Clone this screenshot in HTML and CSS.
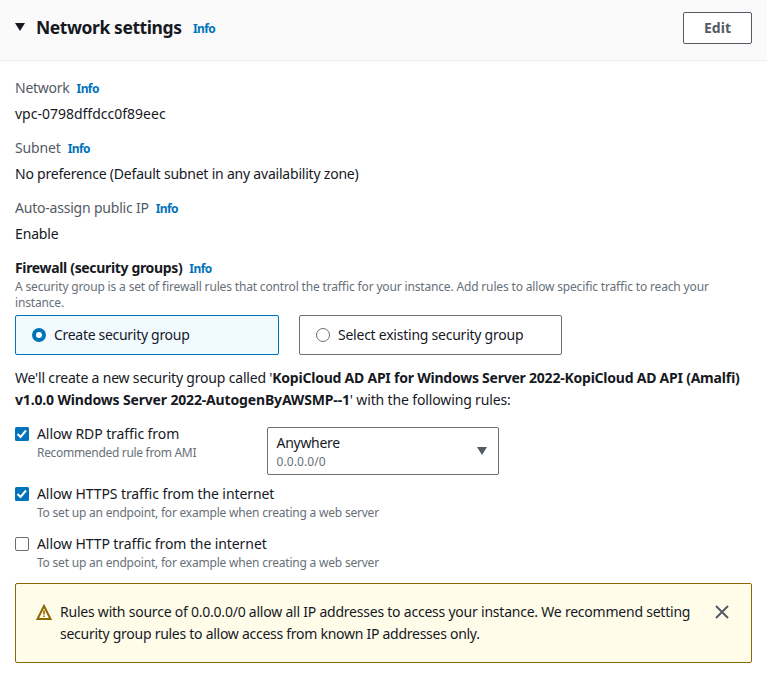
FILE: index.html
```html
<!DOCTYPE html>
<html lang="en">
<head>
<meta charset="utf-8">
<title>Network settings</title>
<link rel="stylesheet" href="styles.css">
</head>
<body>
<section class="panel">
  <header class="panel-header">
    <svg class="caret" width="12" height="10" viewBox="0 0 12 10"><path d="M1 1h10L6 9z"/></svg>
    <h2 class="title">Network settings</h2>
    <a class="info">Info</a>
    <button class="edit">Edit</button>
  </header>
  <div class="content">
    <dl class="fields">
      <div class="field"><dt><span class="l-network">Network</span><a class="info">Info</a></dt><dd><span class="v-vpc">vpc-0798dffdcc0f89eec</span></dd></div>
      <div class="field"><dt><span class="l-subnet">Subnet</span><a class="info">Info</a></dt><dd><span class="v-subnet">No preference (Default subnet in any availability zone)</span></dd></div>
      <div class="field"><dt><span class="l-ip">Auto-assign public IP</span><a class="info">Info</a></dt><dd><span class="v-enable">Enable</span></dd></div>
    </dl>
    <div class="firewall-label"><strong>Firewall (security groups)</strong><a class="info">Info</a></div>
    <p class="description">A security group is a set of firewall rules that control the traffic for your instance. Add rules to allow specific traffic to reach your<br>instance.</p>
    <div class="tiles">
      <label class="tile selected"><span class="radio"></span><span class="t-create">Create security group</span></label>
      <label class="tile"><span class="radio"></span><span class="t-select">Select existing security group</span></label>
    </div>
    <p class="summary"><span class="s-intro">We'll create a new security group called '</span><b class="s-name">KopiCloud AD API for Windows Server 2022-KopiCloud AD API (Amalfi)</b><br><b class="s-version">v1.0.0 Windows Server 2022-AutogenByAWSMP--1</b><span class="s-end">' with the following rules:</span></p>
    <div class="rules">
      <div class="rule first">
        <svg class="check" width="14" height="14" viewBox="0 0 14 14"><rect class="check-box" width="14" height="14" rx="1.5"/><path class="check-mark" d="M2.5 7l3 3 5.5-6.5"/></svg>
        <div class="rule-text"><div class="rule-label r-rdp">Allow RDP traffic from</div><div class="hint h-ami">Recommended rule from AMI</div></div>
        <div class="select">
          <div><div class="select-value">Anywhere</div><div class="select-hint">0.0.0.0/0</div></div>
          <svg width="12" height="10" viewBox="0 0 12 10"><path d="M1 1h10L6 9z"/></svg>
        </div>
      </div>
      <div class="rule">
        <svg class="check" width="14" height="14" viewBox="0 0 14 14"><rect class="check-box" width="14" height="14" rx="1.5"/><path class="check-mark" d="M2.5 7l3 3 5.5-6.5"/></svg>
        <div class="rule-text"><div class="rule-label r-https">Allow HTTPS traffic from the internet</div><div class="hint h-web">To set up an endpoint, for example when creating a web server</div></div>
      </div>
      <div class="rule">
        <svg class="check" width="14" height="14" viewBox="0 0 14 14"><rect class="check-empty" x=".5" y=".5" width="13" height="13" rx="1.5"/></svg>
        <div class="rule-text"><div class="rule-label r-http">Allow HTTP traffic from the internet</div><div class="hint h-web">To set up an endpoint, for example when creating a web server</div></div>
      </div>
    </div>
    <div class="alert">
      <svg class="warning" width="16" height="16" viewBox="0 0 16 16"><path class="tri" d="M8 2l6.500 13H1.500z"/><path class="bang" d="M8 6.500v4M8 11.500v1.500"/></svg>
      <p class="alert-text"><span class="a-one">Rules with source of 0.0.0.0/0 allow all IP addresses to access your instance. We recommend setting</span><br><span class="a-two">security group rules to allow access from known IP addresses only.</span></p>
      <svg class="close" width="14" height="14" viewBox="0 0 14 14"><path d="M1 1l12 12M13 1L1 13"/></svg>
    </div>
  </div>
</section>
</body>
</html>
```
FILE: styles.css
```css
* { box-sizing: border-box; }
body {
  margin: 0;
  background: #fff;
  color: #16191f;
  font: 14px/22px "Noto Sans", sans-serif;
  font-feature-settings: "liga" 1;
  white-space: nowrap;
}
h2, p, dl, dd { margin: 0; }
.panel-header {
  display: flex;
  align-items: center;
  height: 61px;
  padding: 0 15px 5px 14px;
  background: #fafafa;
  border-bottom: 1px solid #eaeded;
}
.caret { margin-right: 10px; margin-bottom: 2px; fill: #16191f; }
.title { width: 146px; padding-bottom: 2px; font-size: 17.5px; line-height: 22px; font-weight: 700; letter-spacing: -.42px; }
.info { color: #0073bb; font-size: 12px; font-weight: 700; margin-left: 7px; letter-spacing: -.6px; }
.title + .info { margin: 2px 0 0 11px; }
.edit {
  width: 69px;
  height: 32px;
  margin-left: auto;
  padding: 0;
  border: 1px solid #545b64;
  border-radius: 2px;
  background: #fff;
  color: #545b64;
  font: 700 14px/20px "Noto Sans", sans-serif;
}
.content { padding: 16px 15px 0; }
.field { height: 60px; }
dt { height: 26px; color: #545b64; }
.firewall-label { height: 22px; }
.firewall-label strong { letter-spacing: -.34px; }
.description { color: #687078; font-size: 12px; line-height: 16px; letter-spacing: -.162px; }
.tiles { display: flex; gap: 20px; margin-top: 4px; }
.tile {
  display: flex;
  align-items: center;
  gap: 8px;
  width: 263px;
  height: 40px;
  padding-left: 16px;
  border: 1px solid #687078;
  border-radius: 2px;
}
.tile.selected { width: 264px; border-color: #0073bb; background: #f1faff; }
.radio { width: 14px; height: 14px; border: 1px solid #687078; border-radius: 50%; background: #fff; }
.selected .radio { border: 4px solid #0073bb; }
.summary { margin-top: 12px; }
.rules { padding-top: 12px; }
.rule { display: flex; height: 50px; }
.rule.first { height: 60px; }
.check { margin: 4px 8px 0 0; }
.check-box { fill: #0073bb; }
.check-mark { fill: none; stroke: #fff; stroke-width: 2; }
.check-empty { fill: #fff; stroke: #687078; }
.hint { color: #687078; font-size: 12px; line-height: 16px; }
.first .rule-text { width: 230px; }
.select {
  display: flex;
  align-items: center;
  justify-content: space-between;
  width: 232px;
  height: 48px;
  margin-top: 4px;
  padding: 0 10px 0 8.5px;
  border: 1px solid #687078;
  border-radius: 2px;
}
.select svg { fill: #545b64; }
.select-value { line-height: 20px; letter-spacing: -.28px; }
.select-hint { color: #687078; font-size: 12px; line-height: 18px; letter-spacing: .1px; }
.select-value { padding-top: 1px; }
.alert {
  display: flex;
  height: 80px;
  padding: 17px 22px 0 20px;
  border: 1px solid #8d6605;
  border-radius: 2px;
  background: #fffce9;
}
.warning { margin: 3px 8px 0 0; }
.tri { fill: none; stroke: #8d6605; stroke-width: 2; }
.bang { stroke: #8d6605; stroke-width: 1.6; }
.close { margin: 4px 0 0 auto; fill: none; stroke: #545b64; stroke-width: 2; }

/* Tracking per text run */
.l-network { letter-spacing: -.25px; }
.l-subnet, .v-enable { letter-spacing: -.15px; }
.v-subnet, .l-ip { letter-spacing: -.21px; }
.t-create { letter-spacing: -.3px; }
.t-select { letter-spacing: -.24px; }
.s-intro { letter-spacing: -.19px; }
.s-name { letter-spacing: -.23px; }
.s-version { letter-spacing: -.16px; }
.s-end { letter-spacing: -.14px; }
.r-rdp, .r-https, .r-http { letter-spacing: -.09px; }
.h-ami { letter-spacing: -.31px; }
.h-web { letter-spacing: -.21px; }
.a-one { letter-spacing: -.225px; }
.a-two { letter-spacing: -.27px; }
```
